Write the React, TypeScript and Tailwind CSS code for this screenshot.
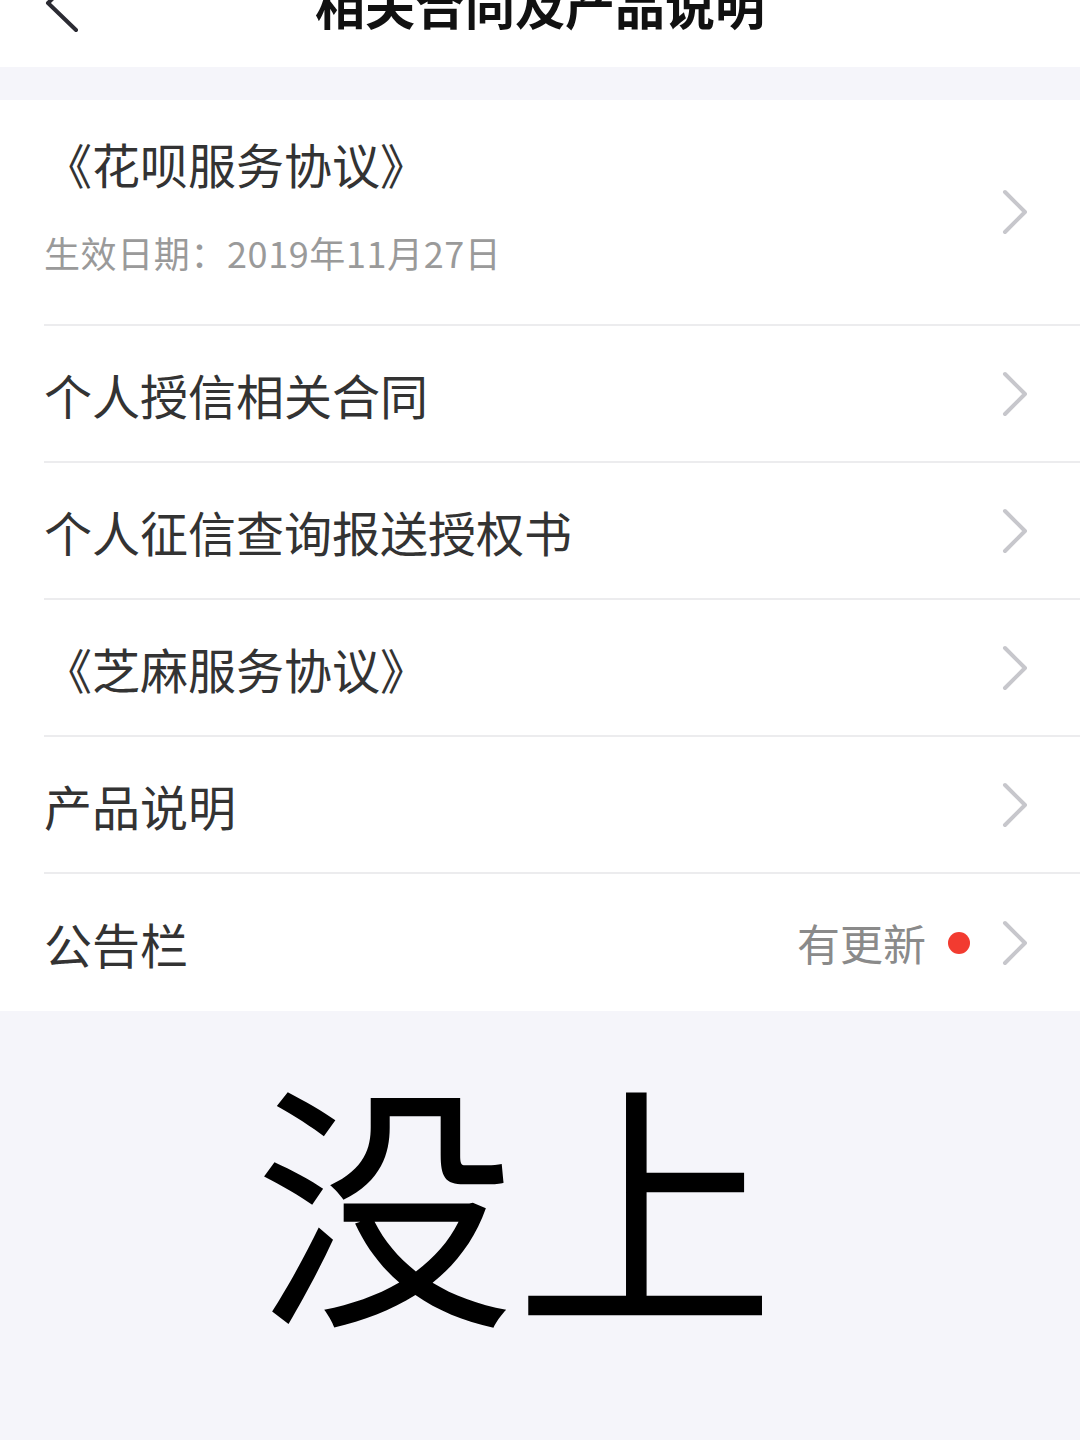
import React from 'react';

const FONT = '"Noto Sans CJK SC", "Noto Sans", sans-serif';

const Chevron: React.FC = () => (
  <svg width="30" height="46" viewBox="0 0 30 46" fill="none" className="shrink-0">
    <path d="M5 3 L25 23 L5 43" stroke="#c7c7cc" strokeWidth="4" strokeLinecap="round" strokeLinejoin="round" />
  </svg>
);

type Row = { title: string; note?: boolean };

const rows: Row[] = [
  { title: '个人授信相关合同' },
  { title: '个人征信查询报送授权书' },
  { title: '《芝麻服务协议》' },
  { title: '产品说明' },
  { title: '公告栏', note: true },
];

const App: React.FC = () => {
  return (
    <div className="min-h-[1440px] bg-[#f5f5fa] overflow-hidden" style={{ fontFamily: FONT }}>
      {/* Header */}
      <header className="h-[67px] bg-white overflow-hidden grid grid-cols-[1fr_auto_1fr] items-start">
        <div className="pl-[42px] -mt-[26px]">
          <svg width="40" height="60" viewBox="0 0 40 60" fill="none">
            <path d="M34 2 L6 29 L34 56" stroke="#2b2b33" strokeWidth="4" strokeLinecap="round" strokeLinejoin="round" />
          </svg>
        </div>
        <h1 className="-mt-[22px] text-[50px] leading-none font-bold text-[#111]">相关合同及产品说明</h1>
        <div />
      </header>

      {/* List */}
      <section className="mt-[33px] bg-white">
        <div className="ml-[44px] h-[226px] flex items-center border-b-2 border-[#ececee] pr-[50px]">
          <div className="flex-1 mb-[16px]">
            <div className="text-[48px] leading-none text-[#333]">《花呗服务协议》</div>
            <div className="mt-[47px] text-[36px] leading-none text-[#9a9a9a] tracking-[0.6px]">生效日期：2019年11月27日</div>
          </div>
          <Chevron />
        </div>
        {rows.map((row, i) => (
          <div
            key={row.title}
            className={`ml-[44px] h-[137px] flex items-center pr-[50px] ${i < rows.length - 1 ? 'border-b-2 border-[#ececee]' : ''}`}
          >
            <div className="flex-1 text-[48px] leading-none text-[#333]">{row.title}</div>
            {row.note && (
              <div className="flex items-center mr-[30px]">
                <span className="text-[43px] leading-none text-[#8a8a8a]">有更新</span>
                <span className="ml-[22px] w-[22px] h-[22px] rounded-full bg-[#f23b30]" />
              </div>
            )}
            <Chevron />
          </div>
        ))}
      </section>

      {/* Caption */}
      <div className="pl-[255px] pt-[53px]">
        <div className="text-[260px] leading-none text-black">没上</div>
      </div>
    </div>
  );
};

export default App;
